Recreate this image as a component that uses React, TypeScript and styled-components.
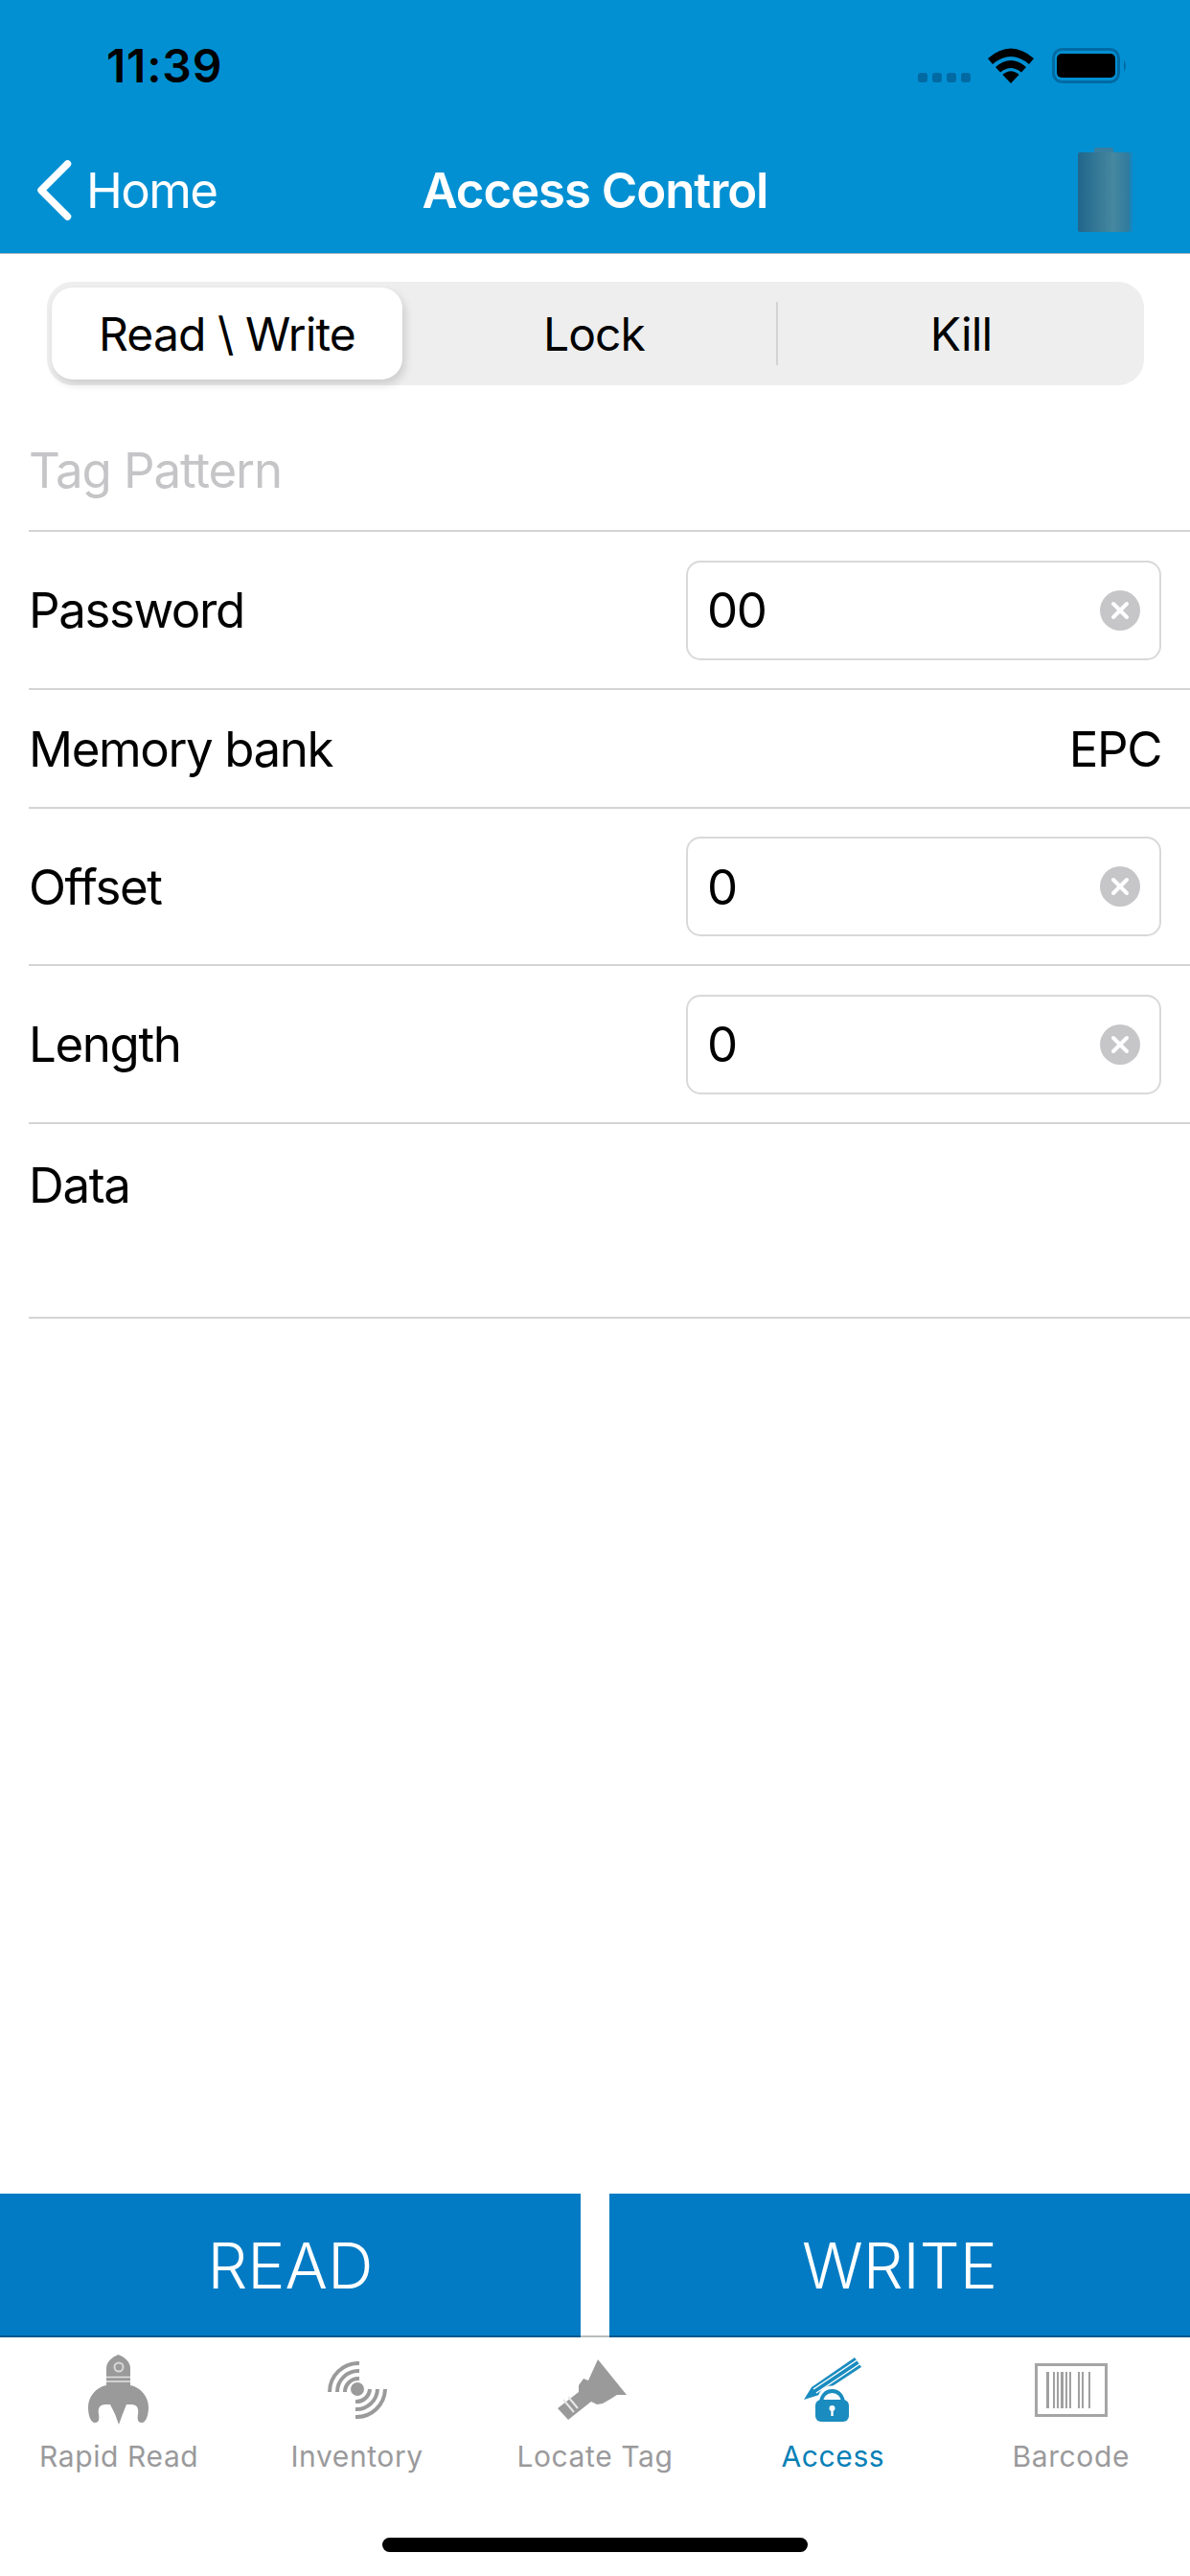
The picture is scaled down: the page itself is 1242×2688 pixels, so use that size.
import React from "react";
import styled, { createGlobalStyle } from "styled-components";

const GlobalStyle = createGlobalStyle`
  html, body {
    margin: 0;
    padding: 0;
    background: #ffffff;
  }
  * {
    box-sizing: border-box;
  }
`;

const Screen = styled.div`
  width: 1242px;
  height: 2688px;
  display: flex;
  flex-direction: column;
  background: #ffffff;
  font-family: Inter, "Liberation Sans", sans-serif;
  color: #000000;
  overflow: hidden;
`;

const Header = styled.header`
  height: 265px;
  flex: none;
  background: #0290d3;
  border-bottom: 1px solid #a7b4bb;
`;

const StatusBar = styled.div`
  height: 136px;
  display: flex;
  align-items: center;
  padding-left: 111px;
  padding-right: 65px;
`;

const Clock = styled.span`
  font-size: 48px;
  font-weight: 600;
  letter-spacing: 0.8px;
  margin-right: auto;
`;

const StatusIcons = styled.div`
  display: flex;
  align-items: center;
`;

const SignalDots = styled.div`
  display: flex;
  gap: 5px;
  margin-top: 26px;
  margin-right: 18px;
`;

const SignalDot = styled.span`
  width: 10px;
  height: 10px;
  border-radius: 3px;
  background: #016aa3;
`;

const NavBar = styled.div`
  height: 124px;
  display: grid;
  grid-template-columns: 1fr auto 1fr;
  align-items: center;
  padding: 0 60px;
`;

const BackLink = styled.div`
  display: flex;
  align-items: center;
  gap: 15px;
  margin-left: -22px;
  color: #ffffff;
  font-size: 51px;
  letter-spacing: -1.6px;
`;

const NavTitle = styled.div`
  color: #ffffff;
  font-size: 51px;
  font-weight: 600;
  letter-spacing: -1.1px;
`;

const NavRight = styled.div`
  display: flex;
  justify-content: flex-end;
`;

const Content = styled.main`
  flex: 1;
  display: flex;
  flex-direction: column;
`;

const Segmented = styled.div`
  margin: 29px 48px 0 49px;
  height: 108px;
  padding: 6px 0 6px 5px;
  display: grid;
  grid-template-columns: 366px 392px 1fr;
  background: #eeeeee;
  border-radius: 27px;
`;

const Segment = styled.div<{ $active?: boolean; $divider?: boolean }>`
  display: flex;
  align-items: center;
  justify-content: center;
  font-size: 48px;
  letter-spacing: -0.9px;
  border-radius: 22px;
  background: ${(p) => (p.$active ? "#ffffff" : "transparent")};
  box-shadow: ${(p) => (p.$active ? "3px 5px 10px rgba(0, 0, 0, 0.14)" : "none")};
  position: relative;
  ${(p) =>
    p.$divider &&
    `padding-left: 8px;
    &::after {
      content: "";
      position: absolute;
      right: 0;
      top: 15px;
      bottom: 15px;
      width: 2px;
      background: #d3d3d5;
    }`}
`;

const Row = styled.div<{ $height: number; $top?: boolean; $padTop?: number }>`
  height: ${(p) => p.$height}px;
  margin-left: 30px;
  display: flex;
  align-items: ${(p) => (p.$top ? "flex-start" : "center")};
  justify-content: space-between;
  padding-top: ${(p) => p.$padTop ?? 0}px;
  padding-right: 30px;
  border-bottom: 2px solid #d4d4d6;
  font-size: 51px;
  letter-spacing: -1.4px;
`;

const Placeholder = styled.span`
  color: #c5c5c7;
  letter-spacing: -1.1px;
`;

const FieldBox = styled.div`
  width: 496px;
  height: 104px;
  display: flex;
  align-items: center;
  justify-content: space-between;
  padding: 0 20px 0 20px;
  border: 2px solid #d9d9db;
  border-radius: 15px;
`;

const ClearButton = styled.span`
  width: 42px;
  height: 42px;
  flex: none;
  display: flex;
  align-items: center;
  justify-content: center;
  border-radius: 50%;
  background: #c6c6c8;
`;

const Actions = styled.div`
  flex: none;
  height: 150px;
  display: grid;
  grid-template-columns: 606px 606px;
  justify-content: space-between;
  border-bottom: 2px solid #b9bcbe;
`;

const ActionButton = styled.button`
  border: none;
  border-bottom: 2px solid #01598c;
  margin-bottom: -2px;
  background: #027bc4;
  color: #ffffff;
  font-family: inherit;
  font-size: 66px;
  font-weight: 300;
  padding: 2px 0 0;
`;

const TabBar = styled.nav`
  flex: none;
  height: 249px;
  display: flex;
  flex-direction: column;
  align-items: center;
  padding-top: 3px;
`;

const Tabs = styled.div`
  width: 100%;
  display: grid;
  grid-template-columns: repeat(5, 1fr);
`;

const Tab = styled.div<{ $active?: boolean }>`
  display: flex;
  flex-direction: column;
  align-items: center;
  color: ${(p) => (p.$active ? "#0680b6" : "#9a9a9c")};
  font-size: 30px;
  line-height: 36px;
  letter-spacing: 0.6px;
`;

const TabIcon = styled.div`
  height: 103px;
  display: flex;
  align-items: center;
  justify-content: center;
  filter: blur(0.5px);
`;

const HomeIndicator = styled.div`
  width: 444px;
  height: 15px;
  margin-top: 67px;
  border-radius: 8px;
  background: #000000;
`;

const Wifi = () => (
  <svg width="48" height="37" viewBox="0 0 48 37">
    <path d="M24 37 L15.5 28 Q24 20.5 32.5 28 Z" fill="#000" />
    <path d="M8 20 Q24 6 40 20 L35 25.5 Q24 16.5 13 25.5 Z" fill="#000" />
    <path d="M0 11 Q24 -10 48 11 L43 17 Q24 1 5 17 Z" fill="#000" />
  </svg>
);

const StatusBattery = () => (
  <svg width="79" height="37" viewBox="0 0 79 37" style={{ marginLeft: 19 }}>
    <rect x="1.5" y="1.5" width="68" height="34" rx="9" fill="none" stroke="#016aa3" strokeWidth="3" />
    <rect x="5" y="6" width="61" height="25" rx="5" fill="#000" />
    <path d="M75 12 Q79 18.500 75 25 Z" fill="#016aa3" />
  </svg>
);

const NavBattery = () => (
  <svg width="57" height="88" viewBox="0 0 57 88">
    <defs>
      <linearGradient id="cell" x1="0" x2="1" y1="0" y2="0">
        <stop offset="0" stopColor="#21668c" />
        <stop offset="0.68" stopColor="#46889f" />
        <stop offset="1" stopColor="#2f7a9e" />
      </linearGradient>
    </defs>
    <rect x="17" y="0" width="20" height="7" rx="2" fill="#3a7f9f" />
    <rect x="0" y="5" width="54" height="83" rx="2" fill="url(#cell)" />
    <rect x="54" y="5" width="3" height="83" fill="#1a85bb" />
  </svg>
);

const ClearIcon = () => (
  <svg width="22" height="22" viewBox="0 0 22 22">
    <path d="M4 4 L18 18 M18 4 L4 18" stroke="#fff" strokeWidth="4" strokeLinecap="round" />
  </svg>
);

const Chevron = () => (
  <svg width="37" height="63" viewBox="0 0 37 63">
    <path d="M32.500 4 L5 31.500 L32.500 59" fill="none" stroke="#fff" strokeWidth="7.500" strokeLinecap="round" strokeLinejoin="round" />
  </svg>
);

const RocketIcon = () => (
  <svg width="64" height="74" viewBox="0 0 64 74">
    <path d="M19 33 V14 C19 7 26 2 31.500 0 C37 2 44 7 44 14 V33 Z" fill="#9a9a9a" />
    <path d="M19 32 C8 34 0 44 0 55 C0 64 3 71 7 71 C11 71 12 68 11 62 C10 56 12 52 18 52 H45 C51 52 53 56 52 62 C51 68 52 71 56 71 C60 71 63 64 63 55 C63 44 55 34 44 32 Z" fill="#9a9a9a" />
    <path d="M23 52 H40 L36 62 L32 73 L28 62 Z" fill="#9a9a9a" />
    <circle cx="32" cy="13" r="4.500" fill="none" stroke="#d8d8d8" strokeWidth="2" />
    <path d="M19 23.500 H44 M19 28 H44" stroke="#e4e4e4" strokeWidth="1.500" />
  </svg>
);

const InventoryIcon = () => (
  <svg width="62" height="60" viewBox="0 0 62 60">
    <circle cx="31" cy="29" r="7" fill="#9a9a9a" />
    <g fill="none" stroke="#9a9a9a" strokeWidth="4">
      <path d="M2 32 A30 30 0 0 1 33 2" />
      <path d="M10 32 A22 22 0 0 1 33 10" />
      <path d="M18 32 A14 14 0 0 1 33 18" />
      <path d="M60 29 A30 30 0 0 1 29 58" />
      <path d="M52 29 A22 22 0 0 1 29 50" />
      <path d="M44 29 A14 14 0 0 1 29 42" />
    </g>
  </svg>
);

const FlashlightIcon = () => (
  <svg width="78" height="64" viewBox="0 0 78 64">
    <path d="M42 0 L72 37 L62 37 L54 42 L47 46 L41 47 L35 44 L11 63 L0 51 L22 34 L22 27 L27 20 L32 22 Z" fill="#9a9a9a" />
    <path d="M6 42 L17 55 M11 39 L21 51" stroke="#e8e8e8" strokeWidth="2" />
  </svg>
);

const AccessIcon = () => (
  <svg width="60" height="67" viewBox="0 0 60 67">
    <path d="M0 44 L8 31 L53 0 L60 10 L16 39 Z" fill="#1a8cbf" />
    <path d="M10 33 L55 3 M13 37 L58 7" stroke="#ffffff" strokeWidth="1.500" />
    <path d="M16 48 C16 38 22 32 29.500 32 C37 32 43 38 43 48" fill="#ffffff" stroke="#ffffff" strokeWidth="5" />
    <path d="M18 48 C18 40 23 35 29.500 35 C36 35 41 40 41 48" fill="#ffffff" stroke="#1a8cbf" strokeWidth="4" />
    <rect x="12" y="44" width="35" height="23" rx="6" fill="#1a8cbf" />
    <circle cx="29.500" cy="53" r="3" fill="#ffffff" />
    <rect x="28.300" y="53" width="2.400" height="8" fill="#ffffff" />
  </svg>
);

const barWidths = [3, 4, 2, 2, 2, 2, 3, 2, 2, 2, 2, 7, 2, 2, 2, 5, 2, 3];

const BarcodeIcon = () => {
  let x = 12;
  return (
    <svg width="76" height="56" viewBox="0 0 76 56">
      <rect x="1.500" y="1.500" width="73" height="53" fill="none" stroke="#a5a5a5" strokeWidth="3" />
      {barWidths.map((w, i) => {
        const bar = i % 2 === 0 ? <rect key={i} x={x} y="9" width={w} height="38" fill="#a0a0a0" /> : null;
        x += w;
        return bar;
      })}
    </svg>
  );
};

const fields = [
  { label: "Password", value: "00", height: 165 },
  { label: "Offset", value: "0", height: 164 },
  { label: "Length", value: "0", height: 165 },
];

const tabs = [
  { label: "Rapid Read", icon: <RocketIcon /> },
  { label: "Inventory", icon: <InventoryIcon /> },
  { label: "Locate Tag", icon: <FlashlightIcon /> },
  { label: "Access", icon: <AccessIcon />, active: true },
  { label: "Barcode", icon: <BarcodeIcon /> },
];

const FieldRow: React.FC<{ label: string; value: string; height: number }> = ({ label, value, height }) => (
  <Row $height={height}>
    {label}
    <FieldBox>
      {value}
      <ClearButton>
        <ClearIcon />
      </ClearButton>
    </FieldBox>
  </Row>
);

const App: React.FC = () => {
  return (
    <Screen>
      <GlobalStyle />
      <Header>
        <StatusBar>
          <Clock>11:39</Clock>
          <StatusIcons>
            <SignalDots>
              <SignalDot />
              <SignalDot />
              <SignalDot />
              <SignalDot />
            </SignalDots>
            <Wifi />
            <StatusBattery />
          </StatusIcons>
        </StatusBar>
        <NavBar>
          <BackLink>
            <Chevron />
            Home
          </BackLink>
          <NavTitle>Access Control</NavTitle>
          <NavRight>
            <NavBattery />
          </NavRight>
        </NavBar>
      </Header>
      <Content>
        <Segmented>
          <Segment $active>Read \ Write</Segment>
          <Segment $divider>Lock</Segment>
          <Segment>Kill</Segment>
        </Segmented>
        <Row $height={153} $padTop={25}>
          <Placeholder>Tag Pattern</Placeholder>
        </Row>
        <FieldRow {...fields[0]} />
        <Row $height={124}>
          Memory bank
          <span>EPC</span>
        </Row>
        <FieldRow {...fields[1]} />
        <FieldRow {...fields[2]} />
        <Row $height={203} $top $padTop={33}>
          Data
        </Row>
      </Content>
      <Actions>
        <ActionButton>READ</ActionButton>
        <ActionButton>WRITE</ActionButton>
      </Actions>
      <TabBar>
        <Tabs>
          {tabs.map((tab) => (
            <Tab key={tab.label} $active={tab.active}>
              <TabIcon>{tab.icon}</TabIcon>
              {tab.label}
            </Tab>
          ))}
        </Tabs>
        <HomeIndicator />
      </TabBar>
    </Screen>
  );
};

export default App;
